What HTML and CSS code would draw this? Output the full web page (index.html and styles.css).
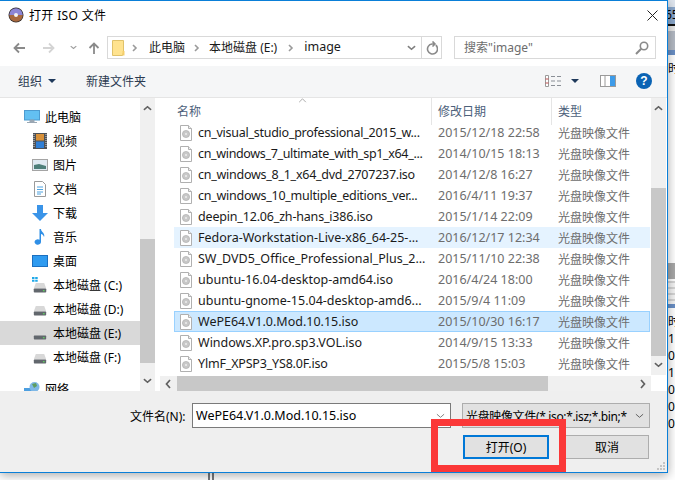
FILE: index.html
```html
<!doctype html>
<html lang="zh-CN">
  <head>
    <meta charset="utf-8" />
    <title>打开 ISO 文件</title>
    <link rel="stylesheet" href="styles.css">
  </head>
  <body>
    <svg class="sprite" aria-hidden="true">
      <symbol id="iso" viewBox="0 0 12 16">
        <path d="M.5.5h8l3 3v12H.5z" fill="#fff" stroke="#b0b0b0" />
        <path d="M8.5.5v3h3" fill="#eee" stroke="#b0b0b0" />
        <circle cx="6" cy="9" r="3.6" fill="#c8c8c8" stroke="#a8a8a8" stroke-width=".6" />
        <circle cx="6" cy="9" r="1" fill="#eee" />
      </symbol>
      <symbol id="drive" viewBox="0 0 16 12">
        <path d="M3 0h10l2.500 6.500h-15z" fill="#d8d8d8" />
        <rect x=".5" y="6.500" width="15" height="5" rx="1" fill="#62676d" />
        <rect x="11.500" y="8.500" width="2" height="1.500" fill="#5fd35f" />
      </symbol>
      <symbol id="chev" viewBox="0 0 8 8">
        <path d="M2 1l3 3-3 3" fill="none" stroke="#9a9a9a" stroke-width="1.6" />
      </symbol>
      <symbol id="up" viewBox="0 0 10 6">
        <path d="M1 5l4-3.5L9 5" fill="none" stroke="#606060" stroke-width="1.7" />
      </symbol>
      <symbol id="down" viewBox="0 0 10 6">
        <path d="M1 1l4 3.5L9 1" fill="none" stroke="#606060" stroke-width="1.7" />
      </symbol>
    </svg>

    <div class="window">
      <div class="titlebar">
        <svg class="disc" viewBox="0 0 16 16">
          <circle cx="8" cy="8" r="7.5" fill="#2e2a2a" />
          <path d="M8 1.2A6.8 6.8 0 0 1 14.8 8H1.2A6.8 6.8 0 0 1 8 1.2z" fill="#8d86d6" />
          <path d="M1.2 8h13.6A6.8 6.8 0 0 1 1.2 8z" fill="#a8693f" />
          <circle cx="8" cy="8" r="2" fill="#f4f4f4" />
        </svg>
        <span class="title">打开 ISO 文件</span>
        <svg class="close" viewBox="0 0 11 11">
          <path d="M.5.5l10 10M10.5.5l-10 10" stroke="#222" stroke-width="1" fill="none" />
        </svg>
      </div>

      <div class="navbar">
        <svg class="nav-arrow" viewBox="0 0 12 12"><path d="M12 6H2M6 1.5L1.5 6 6 10.5" fill="none" stroke="#8a8a8a" stroke-width="1.8" /></svg>
        <svg class="nav-arrow off" viewBox="0 0 12 12"><path d="M0 6h10M6 1.5L10.5 6 6 10.5" fill="none" stroke="#d4d4d4" stroke-width="1.8" /></svg>
        <svg class="nav-drop" viewBox="0 0 10 6"><use href="#down" /></svg>
        <svg class="nav-arrow up" viewBox="0 0 12 12"><path d="M6 12V2M1.5 6L6 1.5 10.5 6" fill="none" stroke="#8a8a8a" stroke-width="1.8" /></svg>

        <div class="address">
          <svg class="folder" viewBox="0 0 13 16"><path d="M.5.5h11v12l-1 3H.5z" fill="#ffe38f" stroke="#e0c26a" /><path d="M10.5 11h2v4.5h-2z" fill="#f5cf6c" /></svg>
          <svg class="crumb-sep first" viewBox="0 0 8 8"><use href="#chev" /></svg>
          <span class="crumb">此电脑</span>
          <svg class="crumb-sep" viewBox="0 0 8 8"><use href="#chev" /></svg>
          <span class="crumb">本地磁盘 (E:)</span>
          <svg class="crumb-sep wide" viewBox="0 0 8 8"><use href="#chev" /></svg>
          <span class="crumb folder-name">image</span>
          <svg class="addr-drop" viewBox="0 0 10 6"><use href="#down" /></svg>
          <div class="refresh">
            <svg viewBox="0 0 12 14"><path d="M9.8 4.2A5 5 0 1 1 6 3H8.500M6.500 .5L9 3 6.500 5.500" fill="none" stroke="#8a8a8a" stroke-width="1.6" /></svg>
          </div>
        </div>

        <div class="search">
          <span>搜索"image"</span>
          <svg viewBox="0 0 14 14"><circle cx="9" cy="5" r="3.700" fill="none" stroke="#8a8a8a" stroke-width="1.600" /><path d="M6.200 7.800L1 13" stroke="#8a8a8a" stroke-width="2" /></svg>
        </div>
      </div>

      <div class="toolbar">
        <span class="tool">组织</span>
        <i class="tri"></i>
        <span class="tool new-folder">新建文件夹</span>
        <svg class="views" viewBox="0 0 16 12">
          <path d="M.5.5h3v11h-3z" fill="#fff" stroke="#9a9a9a" />
          <path d="M.5 4h3M.5 8h3" stroke="#c05050" />
          <path d="M6 1.500h4M12 1.500h4M6 6h4M12 6h4M6 10.500h4M12 10.500h4" stroke="#8a8f96" />
        </svg>
        <i class="tri views-tri"></i>
        <svg class="pane" viewBox="0 0 16 12">
          <rect x=".5" y=".5" width="15" height="11" fill="#fff" stroke="#9a9a9a" />
          <path d="M5 0v12" stroke="#9a9a9a" />
          <rect x="10" y="1" width="5" height="10" fill="#3d9be9" />
        </svg>
        <span class="help">?</span>
      </div>

      <div class="main">
        <nav class="sidebar">
          <div class="place top">
            <svg class="place-icon" viewBox="0 0 16 14"><rect x=".5" y=".5" width="15" height="9.500" fill="#63c0f2" stroke="#4d9bd0" /><path d="M6 10h4v2H6zM3 12.500h10" fill="#9aa7b3" stroke="#9aa7b3" /></svg>
            <span>此电脑</span>
          </div>
          <div class="place">
            <svg class="place-icon" viewBox="0 0 16 16"><rect x="1" y="0" width="14" height="16" fill="#4d5156" /><rect x="4" y="1" width="8" height="6.500" fill="#d8913a" /><rect x="4" y="8.500" width="8" height="6.500" fill="#2f7fd6" /><path d="M2 1v14M14 1v14" stroke="#ddd" stroke-dasharray="1 1" /></svg>
            <span>视频</span>
          </div>
          <div class="place">
            <svg class="place-icon" viewBox="0 0 16 12"><rect x=".5" y=".5" width="15" height="11" fill="#dfeaf2" stroke="#a4a4a4" /><path d="M2 6l5-1 7 2v3H2z" fill="#4d7f7a" /></svg>
            <span>图片</span>
          </div>
          <div class="place">
            <svg class="place-icon" viewBox="0 0 12 16"><path d="M.5.5h8l3 3v12H.5z" fill="#fff" stroke="#9a9a9a" /><path d="M3 6h6M3 8.500h6M3 11h6M3 13h4" stroke="#4fa3e0" /></svg>
            <span>文档</span>
          </div>
          <div class="place">
            <svg class="place-icon" viewBox="0 0 16 16"><path d="M5 0h6v8h5l-8 8-8-8h5z" fill="#3a94e8" /></svg>
            <span>下载</span>
          </div>
          <div class="place">
            <svg class="place-icon" viewBox="0 0 12 16"><path d="M5.500 0h1.500c0 3 4.500 4 3 8-.4-2-2-3-3-3v8a3.200 2.700 0 1 1-1.500-2.300z" fill="#2f8fe6" /></svg>
            <span>音乐</span>
          </div>
          <div class="place">
            <svg class="place-icon" viewBox="0 0 16 12"><rect x=".5" y=".5" width="15" height="11" fill="#2f9bf0" stroke="#1b6fc0" /></svg>
            <span>桌面</span>
          </div>
          <div class="place">
            <svg class="place-icon" viewBox="0 0 16 16"><use href="#drive" x="1" y="6" width="14" height="10" /><path d="M0 0h2.500v2H0zM3.200 0h2.500v2H3.200zM0 2.700h2.500v2H0zM3.200 2.700h2.500v2H3.200z" fill="#1fa8e8" /></svg>
            <span>本地磁盘 (C:)</span>
          </div>
          <div class="place">
            <svg class="place-icon drive" viewBox="0 0 16 12"><use href="#drive" /></svg>
            <span>本地磁盘 (D:)</span>
          </div>
          <div class="place active">
            <svg class="place-icon drive" viewBox="0 0 16 12"><use href="#drive" /></svg>
            <span>本地磁盘 (E:)</span>
          </div>
          <div class="place">
            <svg class="place-icon drive" viewBox="0 0 16 12"><use href="#drive" /></svg>
            <span>本地磁盘 (F:)</span>
          </div>
          <div class="place top network">
            <svg class="place-icon" viewBox="0 0 16 14"><rect x="0" y="6" width="11" height="8" fill="#4d9fe0" /><circle cx="10.500" cy="5" r="5" fill="#7fb8e6" /><path d="M8 2l4-1 1 3-3 2z" fill="#5f9e5f" /></svg>
            <span>网络</span>
          </div>
        </nav>

        <div class="vscroll side">
          <svg class="sb-arrow" viewBox="0 0 10 6"><use href="#up" /></svg>
          <div class="thumb side-thumb"></div>
          <svg class="sb-arrow" viewBox="0 0 10 6"><use href="#down" /></svg>
        </div>

        <div class="files">
          <div class="header">
            <span class="h-name">名称</span>
            <span class="h-date">修改日期</span>
            <span class="h-type">类型</span>
            <svg class="sort" viewBox="0 0 10 6"><path d="M1 5l4-4 4 4" fill="none" stroke="#9a9a9a" /></svg>
          </div>
          <div class="list">
            <div class="rows">
              <div class="row"><span class="name tight"><svg><use href="#iso" /></svg>cn_visual_studio_professional_2015_w...</span><span class="date">2015/12/18 22:58</span><span class="type">光盘映像文件</span></div>
              <div class="row"><span class="name tighter"><svg><use href="#iso" /></svg>cn_windows_7_ultimate_with_sp1_x64_...</span><span class="date">2014/10/15 18:13</span><span class="type">光盘映像文件</span></div>
              <div class="row"><span class="name tight"><svg><use href="#iso" /></svg>cn_windows_8_1_x64_dvd_2707237.iso</span><span class="date">2014/12/8 16:27</span><span class="type">光盘映像文件</span></div>
              <div class="row"><span class="name tight"><svg><use href="#iso" /></svg>cn_windows_10_multiple_editions_ver...</span><span class="date">2016/4/11 19:37</span><span class="type">光盘映像文件</span></div>
              <div class="row"><span class="name slight"><svg><use href="#iso" /></svg>deepin_12.06_zh-hans_i386.iso</span><span class="date">2015/1/14 22:09</span><span class="type">光盘映像文件</span></div>
              <div class="row hover"><span class="name"><svg><use href="#iso" /></svg>Fedora-Workstation-Live-x86_64-25-...</span><span class="date">2016/12/17 12:34</span><span class="type">光盘映像文件</span></div>
              <div class="row"><span class="name"><svg><use href="#iso" /></svg>SW_DVD5_Office_Professional_Plus_2...</span><span class="date">2015/11/10 22:38</span><span class="type">光盘映像文件</span></div>
              <div class="row"><span class="name"><svg><use href="#iso" /></svg>ubuntu-16.04-desktop-amd64.iso</span><span class="date">2016/4/24 18:00</span><span class="type">光盘映像文件</span></div>
              <div class="row"><span class="name"><svg><use href="#iso" /></svg>ubuntu-gnome-15.04-desktop-amd6...</span><span class="date">2015/9/4 11:09</span><span class="type">光盘映像文件</span></div>
              <div class="row selected"><span class="name"><svg><use href="#iso" /></svg>WePE64.V1.0.Mod.10.15.iso</span><span class="date">2015/10/30 16:17</span><span class="type">光盘映像文件</span></div>
              <div class="row"><span class="name"><svg><use href="#iso" /></svg>Windows.XP.pro.sp3.VOL.iso</span><span class="date">2014/9/15 13:33</span><span class="type">光盘映像文件</span></div>
              <div class="row"><span class="name slight"><svg><use href="#iso" /></svg>YlmF_XPSP3_YS8.0F.iso</span><span class="date">2015/5/8 15:03</span><span class="type">光盘映像文件</span></div>
            </div>
          </div>
          <div class="hscroll">
            <svg class="hs-arrow" viewBox="0 0 6 10"><path d="M5 1L1.500 5 5 9" fill="none" stroke="#606060" stroke-width="1.700" /></svg>
            <div class="thumb h-thumb"></div>
            <svg class="hs-arrow" viewBox="0 0 6 10"><path d="M1 1l3.500 4L1 9" fill="none" stroke="#606060" stroke-width="1.700" /></svg>
          </div>
        </div>

        <div class="vscroll-wrap">
          <div class="vscroll">
            <svg class="sb-arrow" viewBox="0 0 10 6"><use href="#up" /></svg>
            <div class="thumb list-thumb"></div>
            <svg class="sb-arrow" viewBox="0 0 10 6"><use href="#down" /></svg>
          </div>
        </div>
      </div>

      <div class="footer">
        <div class="footer-row">
          <span class="file-label">文件名(N):</span>
          <div class="file-input">
            <span>WePE64.V1.0.Mod.10.15.iso</span>
            <svg viewBox="0 0 10 6"><path d="M1 1l4 3.500L9 1" fill="none" stroke="#777" /></svg>
          </div>
          <div class="file-type">
            <span>光盘映像文件(*.iso;*.isz;*.bin;*</span>
            <svg viewBox="0 0 10 6"><path d="M1 1l4 3.500L9 1" fill="none" stroke="#555" /></svg>
          </div>
        </div>
        <div class="footer-row buttons">
          <button class="btn default">打开(O)</button>
          <button class="btn">取消</button>
        </div>
        <svg class="grip" viewBox="0 0 8 8"><path d="M6 0h2v2H6zM3 3h2v2H3zM6 3h2v2H6zM0 6h2v2H0zM3 6h2v2H3zM6 6h2v2H6z" fill="#c4c4c4" /></svg>
      </div>
    </div>

    <div class="behind">
      <div class="b-light"></div>
      <div class="b-tab">65</div>
      <div class="b-black"></div>
      <div class="b-pale"></div>
      <div class="b-gray"></div>
      <div class="b-blue"></div>
      <div class="b-pane">时</div>
      <div class="b-thumb"></div>
      <div class="b-lines"></div>
      <div class="b-blue second"></div>
      <div class="b-table">
        <span>时</span><span>1:</span><span>0:</span><span>1</span><span>0</span><span>0</span><span>0</span>
      </div>
    </div>

    <div class="under"><i></i><i></i></div>

    <div class="callout"></div>
  </body>
</html>
```

FILE: styles.css
```css
* {
  box-sizing: border-box;
}
html,
body {
  margin: 0;
  height: 480px;
  overflow: hidden;
}
body {
  position: relative;
  display: grid;
  grid-template-columns: 668px 7px;
  grid-template-rows: 473px 7px;
  background: #fff;
  color: #000;
  font: 12.5px "Noto Sans", "Noto Sans CJK SC", sans-serif;
}
.sprite {
  position: absolute;
  width: 0;
  height: 0;
}

/* window */
.window {
  position: relative;
  z-index: 1;
  grid-row: 1;
  grid-column: 1;
  display: flex;
  flex-direction: column;
  border: 1px solid #0a7fd8;
  border-left: 0;
  background: #fff;
  box-shadow: 0 2px 10px rgba(0, 0, 0, 0.35);
}
.titlebar {
  flex: none;
  height: 30px;
  display: flex;
  align-items: center;
  padding: 0 9px 2px 8px;
}
.disc {
  width: 16px;
  height: 16px;
}
.title {
  margin-left: 5px;
  font-size: 12px;
  letter-spacing: 0.35px;
}
.close {
  width: 11px;
  height: 11px;
  margin-left: auto;
}

/* nav row */
.navbar {
  flex: none;
  height: 35px;
  display: flex;
  align-items: center;
  padding: 0 0 2px 13px;
}
.nav-arrow {
  width: 12px;
  height: 12px;
  margin-top: 1px;
}
.nav-arrow.off {
  margin-left: 18px;
}
.nav-arrow.up {
  margin-left: 11px;
}
.nav-drop {
  width: 7px;
  height: 5px;
  margin-left: 15px;
  opacity: 0.6;
}
.address {
  width: 335px;
  height: 23px;
  margin-left: 7px;
  display: flex;
  align-items: center;
  border: 1px solid #d9d9d9;
  padding-left: 4px;
  font-size: 12px;
  color: #1a1a1a;
}
.folder {
  width: 13px;
  height: 16px;
}
.crumb-sep {
  width: 8px;
  height: 8px;
  margin: 0 8px;
}
.crumb-sep.first {
  margin: 0 10px 0 6px;
}
.crumb-sep.wide {
  margin: 0 9px 0 10px;
}
.crumb {
  white-space: nowrap;
  padding-bottom: 2px;
}
.folder-name {
  font-size: 12.5px;
}
.addr-drop {
  width: 9px;
  height: 6px;
  margin-left: auto;
  opacity: 0.8;
}
.refresh {
  width: 20px;
  height: 100%;
  margin-left: 5px;
  display: flex;
  align-items: center;
  justify-content: center;
  border-left: 1px solid #d9d9d9;
}
.refresh svg {
  width: 12px;
  height: 14px;
}
.search {
  width: 202px;
  height: 23px;
  margin-left: 12px;
  display: flex;
  align-items: center;
  justify-content: space-between;
  padding: 0 6px 0 9px;
  border: 1px solid #d9d9d9;
  color: #6d6d6d;
  font-size: 12px;
}
.search span {
  padding-bottom: 2px;
}
.search svg {
  width: 14px;
  height: 14px;
}

/* toolbar */
.toolbar {
  flex: none;
  height: 32px;
  display: flex;
  align-items: center;
  padding: 0 0 1px 18px;
  background: #f5f6f7;
  border-bottom: 1px solid #e5e5e5;
}
.tool {
  font-size: 12px;
  color: #2b3a50;
}
.tri {
  width: 0;
  height: 0;
  margin-left: 6px;
  border: 4px solid transparent;
  border-top: 4px solid #1e395b;
  border-bottom: 0;
}
.new-folder {
  margin-left: 30px;
}
.views {
  width: 16px;
  height: 12px;
  margin-left: 399px;
}
.views-tri {
  margin-left: 10px;
}
.pane {
  width: 16px;
  height: 12px;
  margin-left: 21px;
}
.help {
  width: 16px;
  height: 16px;
  margin-left: 20px;
  border-radius: 50%;
  background: #0a63b4;
  color: #fff;
  font: bold 12px/16px "Liberation Sans", sans-serif;
  text-align: center;
}

/* main area */
.main {
  flex: none;
  height: 293px;
  display: flex;
  overflow: hidden;
}
.sidebar {
  flex: none;
  width: 140px;
  padding-top: 7px;
  overflow: hidden;
  font-size: 12px;
}
.place {
  height: 24px;
  display: flex;
  align-items: center;
  padding: 0 0 1px 53px;
  position: relative;
  white-space: nowrap;
}
.place-icon {
  position: absolute;
  left: 32px;
  top: 4px;
  width: 16px;
  height: 16px;
}
.place-icon.drive {
  left: 33px;
  top: 9px;
  width: 14px;
  height: 10px;
}
.place.top {
  padding-left: 45px;
}
.place.top .place-icon {
  left: 24px;
}
.place.network {
  margin-top: 8px;
}
.place.active {
  background: #d9d9d9;
}
.vscroll {
  flex: none;
  width: 15px;
  height: 100%;
  display: flex;
  flex-direction: column;
  align-items: center;
  background: #f0f0f0;
}
.sb-arrow {
  flex: none;
  width: 9px;
  height: 6px;
  margin: 7px 0;
}
.thumb {
  background: #c8c8c8;
}
.side-thumb {
  width: 100%;
  height: 126px;
  margin-top: 121px;
}
.vscroll.side .sb-arrow:last-child {
  margin-top: 15px;
}

/* file list */
.files {
  flex: none;
  width: 491px;
  margin-left: 5px;
  display: flex;
  flex-direction: column;
}
.header {
  position: relative;
  flex: none;
  height: 27px;
  display: grid;
  grid-template-columns: 272px 120px 1fr;
  font-size: 12px;
  color: #4c607a;
  line-height: 27px;
}
.header span {
  padding-left: 6px;
}
.header .h-name {
  padding-left: 17px;
  border-right: 1px solid #e5e5e5;
}
.h-date {
  border-right: 1px solid #e5e5e5;
}
.sort {
  position: absolute;
  left: 138px;
  top: 0;
  width: 9px;
  height: 5px;
}
.list {
  flex: none;
  height: 251px;
  overflow: hidden;
}
.rows {
  margin: -3px 1px 0 14px;
}
.row {
  height: 21px;
  display: grid;
  grid-template-columns: 257px 120px 1fr;
  align-items: center;
  white-space: nowrap;
}
.row.hover {
  background: #e5f3ff;
}
.row.selected {
  background: #cce8ff;
  box-shadow: inset 0 0 0 1px #99d1ff;
}
.name {
  display: flex;
  align-items: center;
  padding-left: 6px;
  color: #1a1a1a;
}
.name.slight {
  letter-spacing: -0.18px;
}
.name.tight {
  letter-spacing: -0.26px;
}
.name.tighter {
  letter-spacing: -0.34px;
}
.name svg {
  flex: none;
  width: 12px;
  height: 16px;
  margin-right: 6px;
}
.date,
.type {
  padding-left: 7px;
  color: #6d6d6d;
}
.type {
  font-size: 12px;
}
.hscroll {
  flex: none;
  height: 15px;
  display: flex;
  align-items: center;
  background: #f0f0f0;
}
.hs-arrow {
  flex: none;
  width: 6px;
  height: 10px;
}
.hs-arrow:first-child {
  margin-left: 5px;
}
.hs-arrow:last-child {
  margin-left: auto;
  margin-right: 5px;
}
.h-thumb {
  width: 371px;
  height: 100%;
  margin-left: 6px;
}
.vscroll-wrap {
  flex: none;
  height: 100%;
  background: #fff;
}
.vscroll-wrap .vscroll {
  height: 277px;
}
.vscroll-wrap .sb-arrow:last-child {
  margin-top: 6px;
}
.list-thumb {
  width: 100%;
  height: 170px;
  margin-top: 70px;
}

/* footer */
.footer {
  position: relative;
  flex: 1;
  background: #efefef;
  padding-top: 12px;
}
.footer-row {
  display: flex;
  align-items: center;
  padding-left: 130px;
}
.file-label {
  width: 62px;
  font-size: 12px;
}
.file-input {
  width: 259px;
  height: 25px;
  display: flex;
  align-items: center;
  padding: 0 5px 0 3px;
  justify-content: space-between;
  background: #fff;
  border: 1px solid #7a7a7a;
}
.file-input svg,
.file-type svg {
  flex: none;
  width: 9px;
  height: 6px;
}
.file-type {
  width: 188px;
  height: 25px;
  margin-left: 11px;
  display: flex;
  align-items: center;
  justify-content: space-between;
  padding: 0 5px 0 3px;
  background: #e1e1e1;
  border: 1px solid #adadad;
  white-space: nowrap;
  overflow: hidden;
  font-size: 12px;
  letter-spacing: -0.35px;
}
.buttons {
  margin-top: 7px;
  padding-left: 463px;
}
.btn {
  width: 86px;
  height: 24px;
  padding: 0;
  background: #e1e1e1;
  border: 1px solid #adadad;
  font: 12px "Noto Sans", "Noto Sans CJK SC", sans-serif;
  color: #000;
}
.btn.default {
  border: 2px solid #0078d7;
}
.btn + .btn {
  width: 84px;
  margin-left: 16px;
}
.grip {
  position: absolute;
  right: 2px;
  bottom: 2px;
  width: 8px;
  height: 8px;
}

/* whatever is behind the dialog */
.behind {
  grid-row: 1 / 3;
  grid-column: 2;
  overflow: hidden;
  font-size: 12px;
  line-height: 16px;
  white-space: nowrap;
}
.b-light {
  height: 7px;
  background: #dfe6ef;
}
.b-tab {
  height: 17px;
  background: #8ba8cc;
  text-indent: -3px;
}
.b-black {
  height: 2px;
  background: #111;
}
.b-pale {
  height: 5px;
  background: #e8e8e8;
}
.b-gray {
  height: 19px;
  background: #b4bac4;
}
.b-blue {
  height: 5px;
  background: #6a8fc5;
}
.b-pane {
  height: 208px;
  padding-top: 6px;
  background: #fff;
}
.b-thumb {
  height: 16px;
  background: #a8a8a8;
}
.b-lines {
  height: 23px;
  margin-top: 2px;
  background: repeating-linear-gradient(#d4d4d4 0 2px, #f4f4f4 2px 6px);
}
.b-blue.second {
  height: 4px;
}
.b-table {
  display: flex;
  flex-direction: column;
  padding-top: 6px;
  background: #fff;
}
.b-table span {
  height: 17px;
}
.under {
  grid-row: 2;
  grid-column: 1;
  display: flex;
  gap: 2px;
  padding-left: 208px;
}
.under i {
  width: 2px;
  height: 7px;
  background: #77797d;
}
.callout {
  position: absolute;
  z-index: 2;
  left: 431px;
  top: 419px;
  width: 135px;
  height: 53px;
  border: 7px solid #fb3838;
}
```
